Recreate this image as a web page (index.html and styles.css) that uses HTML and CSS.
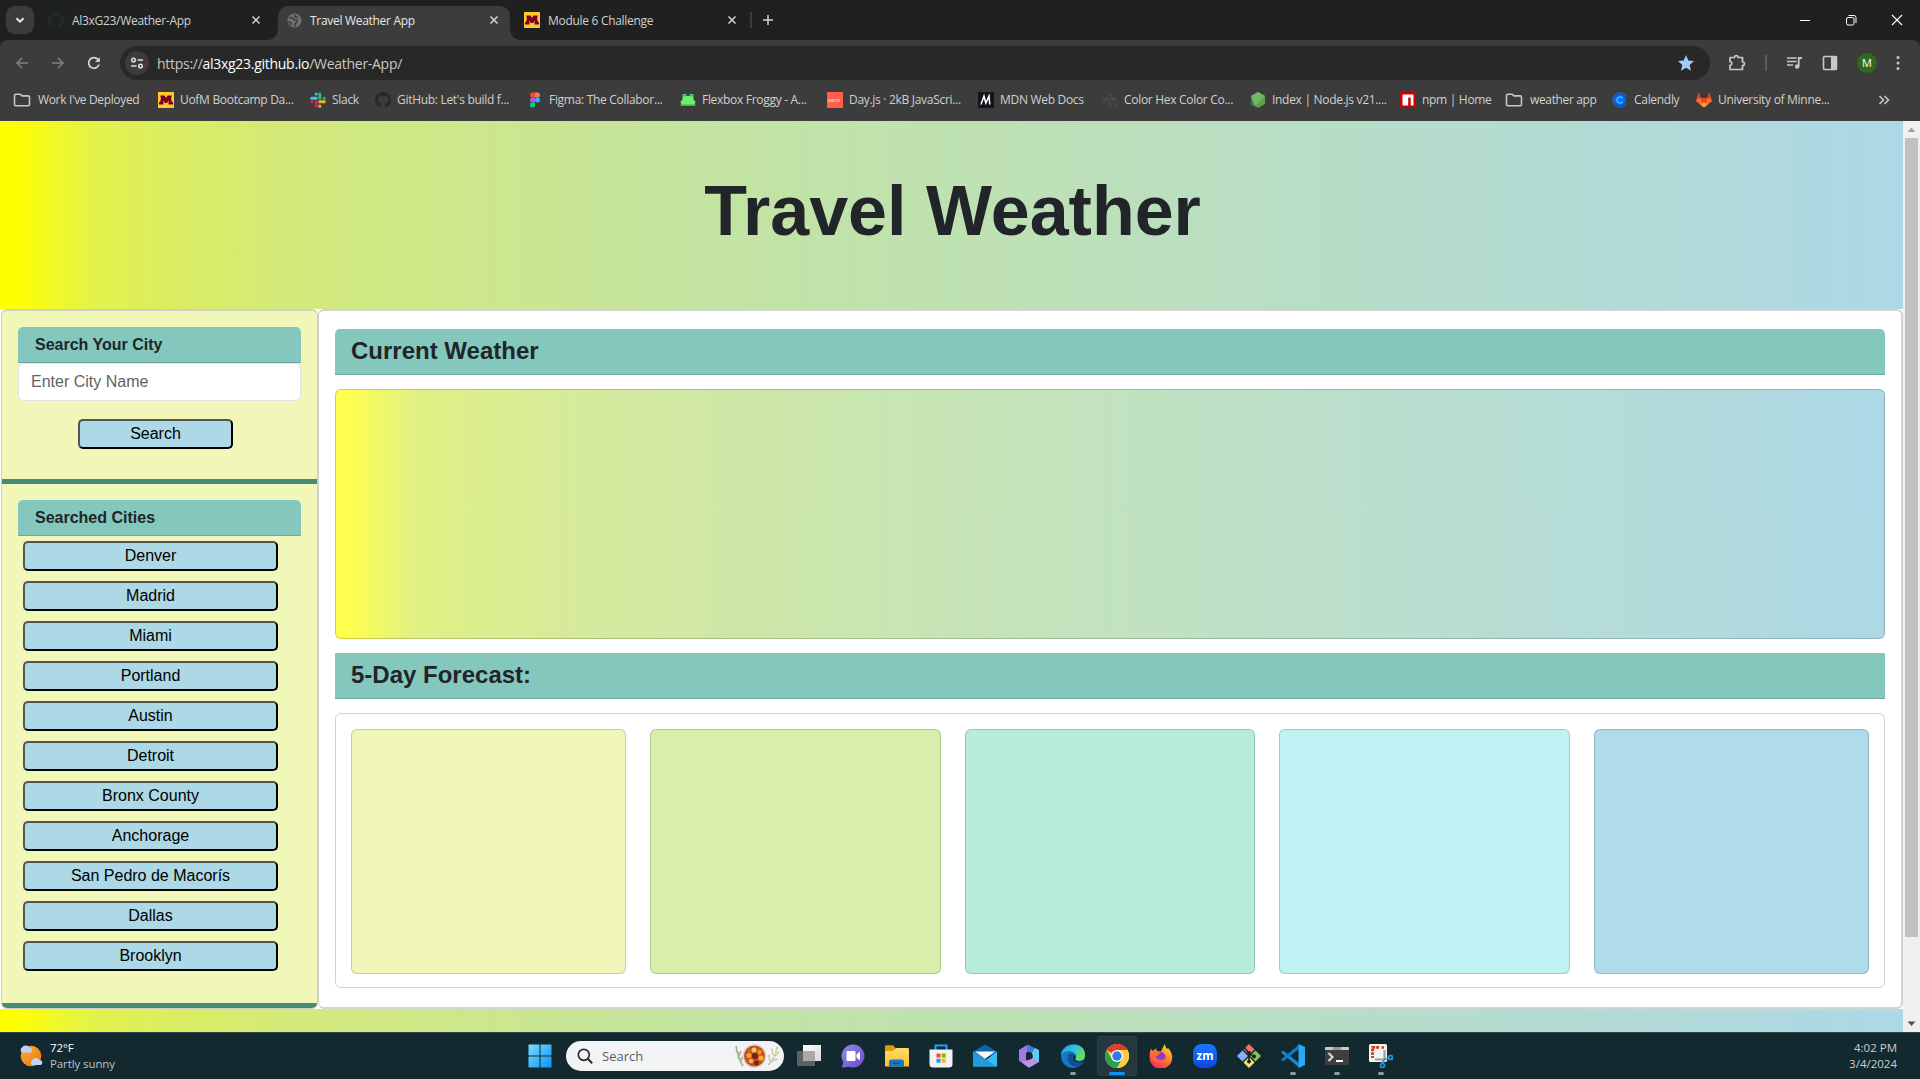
FILE: index.html
```html
<!DOCTYPE html>
<html lang="en">
<head>
<meta charset="utf-8">
<title>Travel Weather App</title>
<link rel="stylesheet" href="styles.css">
</head>
<body>
<svg width="0" height="0" class="defs">
  <defs>
    <linearGradient id="gWin" x1="0" y1="0" x2="1" y2="1"><stop offset="0" stop-color="#7adcff"/><stop offset="1" stop-color="#0a93f5"/></linearGradient>
    <linearGradient id="gSun" x1="0" y1="0" x2="1" y2="1"><stop offset="0" stop-color="#f9b233"/><stop offset="1" stop-color="#ee7412"/></linearGradient>
    <linearGradient id="gEdge" x1="0" y1="0" x2="1" y2="0.6"><stop offset="0" stop-color="#1b9de2"/><stop offset=".55" stop-color="#34c6d8"/><stop offset="1" stop-color="#6be04c"/></linearGradient>
    <linearGradient id="gFox" x1="0.8" y1="0" x2="0.3" y2="1"><stop offset="0" stop-color="#ffe033"/><stop offset=".45" stop-color="#ff8a1e"/><stop offset="1" stop-color="#f5246b"/></linearGradient>
    <linearGradient id="gZoom" x1="0" y1="0" x2="0" y2="1"><stop offset="0" stop-color="#1a76ff"/><stop offset="1" stop-color="#0b49dc"/></linearGradient>
    <linearGradient id="gChat" x1="0" y1="0" x2="1" y2="1"><stop offset="0" stop-color="#8d8ae8"/><stop offset="1" stop-color="#6a4dcb"/></linearGradient>
    <linearGradient id="gFolder" x1="0" y1="0" x2="0" y2="1"><stop offset="0" stop-color="#ffdc6a"/><stop offset="1" stop-color="#fbbf2d"/></linearGradient>
    <symbol id="github" viewBox="0 0 16 16"><path d="M8 0C3.58 0 0 3.58 0 8c0 3.54 2.29 6.53 5.47 7.59.4.07.55-.17.55-.38 0-.19-.01-.82-.01-1.49-2.01.37-2.53-.49-2.69-.94-.09-.23-.48-.94-.82-1.13-.28-.15-.68-.52-.01-.53.63-.01 1.08.58 1.23.82.72 1.21 1.87.87 2.33.66.07-.52.28-.87.51-1.07-1.78-.2-3.64-.89-3.64-3.95 0-.87.31-1.59.82-2.15-.08-.2-.36-1.02.08-2.12 0 0 .67-.21 2.2.82a7.6 7.6 0 0 1 4 0c1.53-1.04 2.2-.82 2.2-.82.44 1.1.16 1.92.08 2.12.51.56.82 1.27.82 2.15 0 3.07-1.87 3.75-3.65 3.95.29.25.54.73.54 1.48 0 1.07-.01 1.93-.01 2.2 0 .21.15.46.55.38A8 8 0 0 0 16 8c0-4.42-3.58-8-8-8z" fill="#24292f"/></symbol>
    <symbol id="umn" viewBox="0 0 16 16"><path d="M0 0h16v16H0z" fill="#ffc72c"/><path d="M2.500 3.500h4L8 6l1.500-2.500h4v2.300h-.6l1 4.200H15v2.500h-4.500V10h.5l-.2-1L9 11H7L5.200 9 5 10h.5v2.500H1V10h1.100l1-4.200h-.6z" fill="#7a0019"/></symbol>
    <symbol id="folder" viewBox="0 0 18 16"><path d="M1.500 3.500v9a1.300 1.300 0 0 0 1.300 1.300h12.400a1.300 1.300 0 0 0 1.300-1.300V5.200a1.300 1.300 0 0 0-1.300-1.300H9L7.200 2.200H2.800a1.300 1.300 0 0 0-1.300 1.300z" fill="none" stroke="#c7c7c7" stroke-width="1.600"/></symbol>
    <symbol id="close" viewBox="0 0 10 10"><path d="M1.500 1.500l7 7M8.500 1.500l-7 7" stroke="#d4d4d4" stroke-width="1.500"/></symbol>
  </defs>
</svg>
<div class="screen">
  <div class="tabstrip">
    <div class="tabsearch"><svg width="12" height="12" viewBox="0 0 12 12"><path d="M2.500 4.300L6 7.700l3.500-3.400" fill="none" stroke="#e8e8e8" stroke-width="2"/></svg></div>
    <div class="tab tab-one"><svg width="16" height="16"><use href="#github"/></svg><span>Al3xG23/Weather-App</span><svg width="10" height="10"><use href="#close"/></svg></div>
    <div class="tab tab-active"><svg width="15" height="15" viewBox="0 0 15 15"><circle cx="7.500" cy="7.500" r="7" fill="#6f7277"/><path d="M2 4.500l3.500.5 1.500 2h3v1.800L8 11v2.500M7 1.500L8.500 4l3 .5M1.500 8.500L4 10v2.500" fill="none" stroke="#3c3c3c" stroke-width="1.600"/></svg><span>Travel Weather App</span><svg width="10" height="10"><use href="#close"/></svg></div>
    <div class="tab tab-three"><svg width="16" height="16"><use href="#umn"/></svg><span>Module 6 Challenge</span><svg width="10" height="10"><use href="#close"/></svg></div>
    <i class="tabsep"></i>
    <svg class="newtab" width="12" height="12" viewBox="0 0 12 12"><path d="M6 1v10M1 6h10" stroke="#d4d4d4" stroke-width="1.500"/></svg>
    <div class="winctl">
      <svg width="12" height="12" viewBox="0 0 12 12"><path d="M1 6.500h10" stroke="#fff"/></svg>
      <svg width="12" height="12" viewBox="0 0 12 12"><rect x="1.500" y="3.500" width="7.500" height="7.500" rx="1.500" fill="none" stroke="#fff"/><path d="M3.500 1.500H9a2 2 0 0 1 2 2V9" fill="none" stroke="#fff"/></svg>
      <svg width="12" height="12" viewBox="0 0 12 12"><path d="M1 1l10 10M11 1L1 11" stroke="#fff" stroke-width="1.100"/></svg>
    </div>
  </div>
  <div class="toolbar">
    <div class="nav">
      <svg width="14" height="14" viewBox="0 0 14 14"><path d="M13 7H2M7 2L2 7l5 5" fill="none" stroke="#7f7f7f" stroke-width="1.500"/></svg>
      <svg width="14" height="14" viewBox="0 0 14 14"><path d="M1 7h11M7 2l5 5-5 5" fill="none" stroke="#7f7f7f" stroke-width="1.500"/></svg>
      <svg width="14" height="14" viewBox="0 0 14 14"><path d="M12 8.500A5.300 5.300 0 1 1 11 3.500L12.500 5" fill="none" stroke="#d0d0d0" stroke-width="1.800"/><path d="M12.700 1v5H8z" fill="#d0d0d0"/></svg>
    </div>
    <div class="omnibox">
      <div class="siteinfo"><svg width="14" height="14" viewBox="0 0 14 14"><path d="M7.500 4H13M1 10h5.500" stroke="#e0e0e0" stroke-width="1.700"/><circle cx="3.500" cy="4" r="1.800" fill="none" stroke="#e0e0e0" stroke-width="1.500"/><circle cx="10.500" cy="10" r="1.800" fill="none" stroke="#e0e0e0" stroke-width="1.500"/></svg></div>
      <span class="url">https://<b>al3xg23.github.io</b>/Weather-App/</span>
      <svg width="16" height="16" viewBox="0 0 16 16"><path d="M8 0l2.300 5.600 5.700.5-4.300 3.900 1.300 5.800L8 12.700 3 15.800 4.300 10 0 6.100l5.700-.5z" fill="#a8c7fa"/></svg>
    </div>
    <div class="actions">
      <svg width="18" height="18" viewBox="0 0 18 18"><path d="M2 3.500h4.500C6.500 1 10 1 10 3.500h4.500V8c2.600 0 2.600 3.500 0 3.500v4H2v-4.200c2.500-.3 2.500-3.300 0-3.600z" fill="none" stroke="#c7c7c7" stroke-width="1.700" stroke-linejoin="round"/></svg>
      <i></i>
      <svg width="17" height="16" viewBox="0 0 17 16"><path d="M1 3h9.500M1 6.500h9.500M1 10h6" stroke="#c7c7c7" stroke-width="1.600"/><path d="M12.700 11V3H16" fill="none" stroke="#c7c7c7" stroke-width="1.800"/><circle cx="11.200" cy="11.500" r="2.300" fill="#c7c7c7"/></svg>
      <svg width="16" height="16" viewBox="0 0 16 16"><rect x="1.500" y="1.500" width="13" height="13" rx="1" fill="none" stroke="#c7c7c7" stroke-width="1.600"/><path d="M9 1h6v14H9z" fill="#c7c7c7"/></svg>
      <div class="avatar">M</div>
      <svg width="4" height="16" viewBox="0 0 4 16"><circle cx="2" cy="2.500" r="1.500" fill="#c7c7c7"/><circle cx="2" cy="8" r="1.500" fill="#c7c7c7"/><circle cx="2" cy="13.500" r="1.500" fill="#c7c7c7"/></svg>
    </div>
  </div>
  <div class="bookmarks">
    <div class="wide"><svg width="18" height="16"><use href="#folder"/></svg><span>Work I've Deployed</span></div>
    <div><svg width="16" height="16"><use href="#umn"/></svg><span>UofM Bootcamp Da...</span></div>
    <div><svg width="16" height="16" viewBox="0 0 16 16" fill="none" stroke-width="3" stroke-linecap="round"><path d="M6.200 2v.1M1.700 6.200h4.500" stroke="#36c5f0"/><path d="M9.800 2v4.200M14.300 6.200h-.2" stroke="#2eb67d"/><path d="M9.800 9.800h4.500M9.800 14v.2" stroke="#ecb22e"/><path d="M6.200 9.800v4.200M1.700 9.800h.2" stroke="#e01e5a"/></svg><span>Slack</span></div>
    <div><svg width="16" height="16"><use href="#github"/></svg><span>GitHub: Let's build f...</span></div>
    <div><svg width="16" height="16" viewBox="0 0 16 16"><path d="M8 .5H5.500a2.500 2.500 0 0 0 0 5H8z" fill="#f24e1e"/><path d="M8 .5h2.500a2.500 2.500 0 0 1 0 5H8z" fill="#ff7262"/><path d="M8 5.500H5.500a2.500 2.500 0 0 0 0 5H8z" fill="#a259ff"/><circle cx="10.500" cy="8" r="2.500" fill="#1abcfe"/><path d="M8 10.500H5.500A2.500 2.500 0 1 0 8 13z" fill="#0acf83"/></svg><span>Figma: The Collabor...</span></div>
    <div><svg width="16" height="16" viewBox="0 0 16 16"><circle cx="4.500" cy="4" r="2.200" fill="#5fe06a"/><circle cx="11.500" cy="4" r="2.200" fill="#5fe06a"/><path d="M3 4h10l.7 4 1.800 1.500-.8 4H1.300l-.8-4L2.300 8z" fill="#6cf06f"/><path d="M.5 12.500h15V14H.5z" fill="#3cae49"/><circle cx="4.500" cy="3.700" r=".7" fill="#256b2d"/><circle cx="11.500" cy="3.700" r=".7" fill="#256b2d"/></svg><span>Flexbox Froggy - A...</span></div>
    <div><svg width="16" height="16" viewBox="0 0 16 16"><path d="M0 0h16v16H0z" fill="#ff5f4c"/><text x="1" y="9.500" class="dayjs">DAY.JS</text></svg><span>Day.js · 2kB JavaScri...</span></div>
    <div><svg width="16" height="16" viewBox="0 0 16 16"><path d="M0 0h16v16H0z" fill="#15141a"/><path d="M3 12.500L6 4l1.800 7L11 4l.8 8.500M8 11l3-7" fill="none" stroke="#fff" stroke-width="1.500"/></svg><span>MDN Web Docs</span></div>
    <div><svg width="16" height="16" viewBox="0 0 16 16"><text x="0.500" y="13.500" class="chex">ch</text></svg><span>Color Hex Color Co...</span></div>
    <div><svg width="16" height="16" viewBox="0 0 16 16"><path d="M8 0l7 4v8l-7 4-7-4V4z" fill="#5fa04e"/><path d="M8 0l7 4-10 10-4-2V4z" fill="#6fb963"/><path d="M1 4l4 10-4-2z" fill="#3e863d"/></svg><span>Index | Node.js v21....</span></div>
    <div><svg width="16" height="16" viewBox="0 0 16 16"><path d="M0 0h16v16H0z" fill="#cb0000"/><path d="M2.500 2.500h11v11h-2.800v-8H8.200v8H2.500z" fill="#fff"/></svg><span>npm | Home</span></div>
    <div class="wide"><svg width="18" height="16"><use href="#folder"/></svg><span>weather app</span></div>
    <div><svg width="16" height="16" viewBox="0 0 16 16"><path d="M14.500 4.500a7.200 7.200 0 1 0 0 7" fill="none" stroke="#0a6cf0" stroke-width="1.300"/><circle cx="8" cy="8" r="5.800" fill="#006bff"/><path d="M10.500 6.300a3 3 0 1 0 0 3.400" fill="none" stroke="#3fc4ff" stroke-width="1.500"/></svg><span>Calendly</span></div>
    <div><svg width="16" height="16" viewBox="0 0 16 16"><path d="M0 9.300L2.700.8l2 5.500h6.600l2-5.500L16 9.300 8 15.500z" fill="#fc6d26"/><path d="M2.700.8l2 5.500H1zM13.300.8l-2 5.500H15zM4.700 6.300h6.600L8 15z" fill="#e24329"/><path d="M4.500 12.500L8 10l3.500 2.500L8 15.500z" fill="#fca326"/></svg><span>University of Minne...</span></div>
    <svg class="more" width="12" height="12" viewBox="0 0 12 12"><path d="M1.500 2l4 4-4 4M6.500 2l4 4-4 4" fill="none" stroke="#c7c7c7" stroke-width="1.600"/></svg>
  </div>

  <div class="viewport">
    <div class="page">
      <header class="hero"><h1>Travel Weather</h1></header>
      <div class="columns">
        <aside class="sidebar">
          <section class="search">
            <h5>Search Your City</h5>
            <input type="text" placeholder="Enter City Name">
            <button>Search</button>
          </section>
          <section class="history">
            <h5>Searched Cities</h5>
            <button>Denver</button><button>Madrid</button><button>Miami</button><button>Portland</button><button>Austin</button><button>Detroit</button><button>Bronx County</button><button>Anchorage</button><button>San Pedro de Macorís</button><button>Dallas</button><button>Brooklyn</button>
          </section>
        </aside>
        <main class="main">
          <h4 class="round">Current Weather</h4>
          <div class="current"></div>
          <h4>5-Day Forecast:</h4>
          <div class="forecast">
            <div class="day d1"></div><div class="day d2"></div><div class="day d3"></div><div class="day d4"></div><div class="day d5"></div>
          </div>
        </main>
      </div>
      <footer class="foot"></footer>
    </div>
    <div class="scrollbar">
      <svg width="17" height="17" viewBox="0 0 17 17"><path d="M8.500 6.500l4 4.500h-8z" fill="#a3a3a3"/></svg>
      <div class="thumb"></div>
      <svg width="17" height="17" viewBox="0 0 17 17"><path d="M8.500 11l4-4.500h-8z" fill="#505050"/></svg>
    </div>
  </div>

  <div class="taskbar">
    <div class="weather">
      <svg width="26" height="26" viewBox="0 0 26 26"><circle cx="13" cy="13" r="10.300" fill="url(#gSun)"/><path d="M4 9.500a3 3 0 0 1 .3-5.200 4.300 4.300 0 0 1 7.400.5 2.500 2.500 0 0 1 1 4.700z" fill="#bcd0f5"/><path d="M14 22a3 3 0 0 1 .3-4.800 4 4 0 0 1 7-.2 2.700 2.700 0 0 1 1.700 5z" fill="#c5d7f8"/></svg>
      <p><b>72°F</b><br>Partly sunny</p>
    </div>
    <div class="apps">
      <svg class="start" width="24" height="24" viewBox="0 0 24 24"><path d="M.5.5h11v11H.5zM12.500.5h11v11h-11zM.5 12.500h11v11H.5zM12.500 12.500h11v11h-11z" fill="url(#gWin)"/></svg>
      <div class="tasksearch">
        <svg width="16" height="16" viewBox="0 0 16 16"><circle cx="6.800" cy="6.800" r="5.500" fill="none" stroke="#2b2b2b" stroke-width="1.700"/><path d="M10.800 10.800l4.400 4.400" stroke="#2b2b2b" stroke-width="2"/></svg>
        <span>Search</span>
        <svg width="46" height="26" viewBox="0 0 46 26"><path d="M2 3q2 12 7 20M2.500 8l3 3M3.500 14l4 4M7 8l-2 5M9 13l-2 4" stroke="#a9b48c" stroke-width="1.700" fill="none"/><path d="M43 4q-2 12-9 18M38 6l1 7M45 9l-4 4M43 16l-5 2M35 12l1 8" stroke="#c0c59b" stroke-width="1.700" fill="none" stroke-dasharray="2.500 1"/><circle cx="20.500" cy="13" r="12" fill="#d9dadb"/><circle cx="20.500" cy="13" r="10.500" fill="#c9501b"/><circle cx="15" cy="12.500" r="2.500" fill="#ff9d2c"/><circle cx="20" cy="7" r="2.500" fill="#f1c476"/><circle cx="25.500" cy="9" r="2.200" fill="#ff8c1a"/><circle cx="21" cy="13" r="3" fill="#6a241b"/><circle cx="27" cy="15" r="2.500" fill="#ffae47"/><circle cx="17" cy="18" r="2.200" fill="#f4b15c"/><circle cx="22.500" cy="20" r="2.400" fill="#74261b"/><circle cx="15.500" cy="8" r="1.200" fill="#65a529"/><circle cx="25" cy="12" r="1" fill="#65a529"/></svg>
      </div>
      <div class="app"><svg width="24" height="24" viewBox="0 0 24 24"><defs><linearGradient id="gTask" x1="0" y1="0" x2="1" y2="1"><stop offset="0" stop-color="#fff"/><stop offset="1" stop-color="#d8d8d8"/></linearGradient></defs><path d="M6 1h18v16H6z" fill="url(#gTask)"/><path d="M0 7h18v15H0z" fill="#5d6163"/><path d="M6 7h12v10H6z" fill="#a8a9a9"/></svg></div>
      <div class="app"><svg width="24" height="24" viewBox="0 0 24 24"><path d="M12 .5A11.500 11.500 0 1 1 8 22.800L.8 23.500l1.600-5.200A11.500 11.500 0 0 1 12 .5z" fill="url(#gChat)"/><rect x="5.500" y="7" width="9" height="10" rx="1" fill="#fff"/><path d="M15.500 10.500L19 7.500v9l-3.500-3z" fill="#fff"/></svg></div>
      <div class="app"><svg width="24" height="24" viewBox="0 0 24 24"><path d="M0 2.500A1.300 1.300 0 0 1 1.300 1.200H8L10.500 4v4H0z" fill="#dc9c0f"/><path d="M0 7h8l3-3h11.700A1.300 1.300 0 0 1 24 5.300V22.500H0z" fill="url(#gFolder)"/><path d="M4 22.500V18a2.500 2.500 0 0 1 2.500-2.500h10A2.500 2.500 0 0 1 19 18v4.500z" fill="#1379ca"/><path d="M8 18.500h7v1.500H8z" fill="#075795"/></svg></div>
      <div class="app"><svg width="24" height="24" viewBox="0 0 24 24"><path d="M6.500 6V1.500h11V6" fill="none" stroke="#16a7ee" stroke-width="2"/><path d="M.5 5.500h23V20a3.500 3.500 0 0 1-3.500 3.500H4A3.500 3.500 0 0 1 .5 20z" fill="#f2f2f2"/><path d="M7.500 9.500h4v4h-4z" fill="#f25022"/><path d="M12.700 9.500h4v4h-4z" fill="#7fba00"/><path d="M7.500 14.700h4v4h-4z" fill="#00a4ef"/><path d="M12.700 14.700h4v4h-4z" fill="#ffb900"/></svg></div>
      <div class="app"><svg width="24" height="24" viewBox="0 0 24 24"><path d="M0 7.500L12 .5l12 7V12H0z" fill="#0f62ad"/><path d="M2 7.500h20L12 15z" fill="#f3f5f7"/><path d="M0 7.500L13 16l11-8.500v15H0z" fill="#35bdf0"/><path d="M0 7.500L24 22.500H0z" fill="#219bdd"/></svg></div>
      <div class="app"><svg width="24" height="24" viewBox="0 0 24 24"><path d="M10.500.8L2 6v10.500l5 2.500 2-2.500V9l4-3V1.500z" fill="#a17be4"/><path d="M10.500.8L21 5.500q1 .5 1 1.500v6l-6-1-1-3-4-1.500q-2.500-3-.5-6.700z" fill="#3c7fd0"/><path d="M2 16.500l3 1 6-1.500 4-2 1-2 6 5v1L13 23.300q-1 .5-2 0z" fill="#bd91e6"/><path d="M15 9l3-4.800 3 1.300q1 .5 1 1.500v11l-6-4z" fill="#62cdf4"/><path d="M12 8.500l3.500 2v3.500L12 16l-3-2v-3.500z" fill="#12292f"/></svg></div>
      <div class="app run"><svg width="24" height="24" viewBox="0 0 24 24"><circle cx="12" cy="12" r="12" fill="#1479c8"/><path d="M0 11C1-1 24-4 24 11c0 5-5 7-9 5-2-1 .5-2 0-4.500C14 6 4 5 0 11z" fill="url(#gEdge)"/><path d="M7 11c-2 7 4 13 11 11.500 2-1 4-3 5-5-4 2-9 1-11-2-1.300-2-.5-4 1-5-2-1.500-5-1.500-6 .5z" fill="#104f91"/><path d="M14.500 11c1 2-1 3.500 0 5 2 2 6 2 8.500-.5l-.5 2c-4 2-9 1-10.500-2.500-1-2 0-3.500 2.500-4z" fill="#12292f"/></svg></div>
      <div class="app active"><svg width="24" height="24" viewBox="0 0 24 24"><circle cx="12" cy="12" r="12" fill="#ffcd40"/><path d="M12 12L1.600 6A12 12 0 0 1 22.400 6H12z" fill="#e33b2e"/><path d="M1.600 6a12 12 0 0 0 10.400 18l5.200-9L12 12 6.800 15z" fill="#2da24c"/><path d="M12 6h10.400A12 12 0 0 1 12 24l5.200-9z" fill="#ffcd40"/><circle cx="12" cy="12" r="6" fill="#fff"/><circle cx="12" cy="12" r="4.700" fill="#2c7bea"/></svg></div>
      <div class="app"><svg width="24" height="24" viewBox="0 0 24 24"><path d="M2 5c.5 0 1 1 1.500 2L7 4.500 8 7l4 .5c1-2 2-5 4-7.500.3 2 .5 3.500 2 5l1-1c3 3 4.500 7 4.200 10A11.300 11.300 0 0 1 .6 13C.5 10 1 7 2 5z" fill="url(#gFox)"/><circle cx="11.500" cy="13" r="5" fill="#8f36d3"/><path d="M3 8c4-2 6 0 9 0l-2.500 3-3 1.500c1 4 7 5 9.500 1 0 6-11 7-13 0z" fill="#ff6932"/></svg></div>
      <div class="app"><svg width="24" height="24" viewBox="0 0 24 24"><rect width="24" height="24" rx="8.500" fill="url(#gZoom)"/><text x="12" y="15.500" class="zm" text-anchor="middle">zm</text></svg></div>
      <div class="app"><svg width="24" height="24" viewBox="0 0 24 24"><path d="M12 0l5.500 5.500L12 11 6.500 5.500z" fill="#f0726b"/><path d="M5.500 6.500L11 12l-5.500 5.500L0 12z" fill="#80b3fa"/><path d="M18.500 6.500L24 12l-5.500 5.500L13 12z" fill="#7ec85b"/><path d="M12 13l5.500 5.500L12 24l-5.500-5.500z" fill="#ffdf70"/><path d="M7.500 4l4.500 5v9M12 9l5 4" fill="none" stroke="#1b2425" stroke-width="1.600"/><circle cx="12" cy="9" r="2" fill="#1b2425"/><circle cx="17" cy="12.500" r="2" fill="#1b2425"/><circle cx="12" cy="17.500" r="2" fill="#1b2425"/></svg></div>
      <div class="app run"><svg width="24" height="24" viewBox="0 0 24 24"><path d="M2 6.500L18 19v4.500L0 8.500z" fill="#1988d2"/><path d="M2 17.500L18 5V.5L0 15.500z" fill="#1279be"/><path d="M17.500 0L24 3v18l-6.500 3z" fill="#2aa8f2"/></svg></div>
      <div class="app run"><svg width="24" height="24" viewBox="0 0 24 24"><rect y="3" width="24" height="18" rx="1" fill="#3e3e3e"/><path d="M0 6V4a1 1 0 0 1 1-1h22a1 1 0 0 1 1 1v2z" fill="#c8c8c8"/><path d="M8 3h8v3H8z" fill="#999"/><path d="M3.500 9l4 4-4 4" fill="none" stroke="#d3d3d3" stroke-width="2.200"/><path d="M11 17h7" stroke="#fff" stroke-width="2"/></svg></div>
      <div class="app run"><svg width="24" height="24" viewBox="0 0 24 24"><rect width="18" height="18" rx="1.500" fill="#f4f4f4"/><path d="M10 3.300H3.500V14" fill="none" stroke="#d83b01" stroke-width="2.800" stroke-dasharray="2.800 1"/><path d="M12.500 3.500H15" stroke="#d83b01" stroke-width="2.500"/><path d="M15.500 6v9.500H6M15 15l-1.500 5" fill="none" stroke="#9aa0a3" stroke-width="2.200"/><circle cx="21.500" cy="13.500" r="2" fill="none" stroke="#2598e0" stroke-width="1.700"/><circle cx="13.500" cy="21.500" r="2" fill="none" stroke="#2598e0" stroke-width="1.700"/><path d="M19.500 14l-4.500 1.500-1 4" stroke="#2598e0" stroke-width="1.500" fill="none"/></svg></div>
    </div>
    <p class="clock">4:02 PM<br>3/4/2024</p>
  </div>
</div>
</body>
</html>
```
FILE: styles.css
```css
* { box-sizing: border-box; }
body { margin: 0; font-family: "Liberation Sans", Arial, sans-serif; color: #212529; overflow: hidden; }
svg { display: block; flex: none; }
.defs { position: absolute; }
p, h1, h4, h5 { margin: 0; }
.screen { width: 1920px; height: 1079px; display: flex; flex-direction: column; background: #1f2120; }

/* Browser chrome */
.tabstrip, .toolbar, .bookmarks, .taskbar { font-family: "Open Sans", "Noto Sans", sans-serif; font-size: 12px; letter-spacing: -0.3px; color: #d0d0d0; white-space: nowrap; flex: none; }
.tabstrip { height: 40px; display: flex; align-items: center; padding-left: 6px; }
.tabsearch { width: 28px; height: 28px; border-radius: 9px; background: #3c3c3c; display: grid; place-items: center; }
.tab { display: flex; align-items: center; gap: 8px; height: 34px; align-self: flex-end; padding-bottom: 6px; }
.tab span { flex: 1; }
.tab-one { width: 243px; padding: 0 16px 6px 14px; }
.tab-active { width: 232px; margin-left: 1px; padding: 0 11px 6px 9px; border-radius: 10px 10px 0 0; background: #3c3c3c; color: #e6e6e6; position: relative; }
.tab-active::before, .tab-active::after { content: ""; position: absolute; bottom: 0; width: 10px; height: 10px; }
.tab-active::before { left: -10px; background: radial-gradient(circle at 0 0, transparent 9.5px, #3c3c3c 10px); }
.tab-active::after { right: -10px; background: radial-gradient(circle at 100% 0, transparent 9.5px, #3c3c3c 10px); }
.tab-three { width: 234px; padding: 0 7px 6px 14px; }
.tabsep { width: 2px; height: 16px; margin-left: 6px; background: #3c3c3c; }
.newtab { margin-left: 10px; }
.winctl { margin-left: auto; display: flex; gap: 34px; padding-right: 17px; }
.toolbar { height: 44px; display: flex; align-items: center; padding: 3px 22px 1px 15px; background: #3c3c3c; border-radius: 8px 8px 0 0; }
.nav { display: flex; gap: 22px; width: 105px; flex: none; }
.omnibox { width: 1590px; flex: none; height: 34px; border-radius: 17px; background: #282828; display: flex; align-items: center; padding: 0 16px 0 5px; }
.siteinfo { width: 24px; height: 24px; border-radius: 50%; background: #3c3c3c; display: grid; place-items: center; }
.url { flex: 1; margin-left: 8px; font-size: 14px; color: #c7c7c7; letter-spacing: -0.28px; }
.url b { font-weight: 400; color: #fff; }
.actions { flex: 1; display: flex; align-items: center; justify-content: space-between; padding-left: 18px; margin-right: -2px; }
.actions i { width: 2px; height: 16px; background: #5b5b5b; }
.avatar { width: 20px; height: 20px; border-radius: 50%; background: #33691e; color: #fff; text-align: center; line-height: 20px; font-size: 11px; letter-spacing: 0; }
.bookmarks { height: 37px; display: grid; grid-template-columns: 145px 152px 65px 152px 153px 147px 151px 124px 148px 150px 105px 107px 84px 182px 12px; align-items: center; padding: 0 0 6px 13px; background: #3c3c3c; }
.bookmarks div { display: flex; align-items: center; gap: 6px; }
.bookmarks .wide { gap: 7px; letter-spacing: -0.35px; }
.dayjs { font: bold 4px "Liberation Sans", sans-serif; fill: #ffd1ca; }
.chex { font: 14px "Liberation Sans", sans-serif; fill: #1c1c1c; stroke: #707070; stroke-width: .4px; letter-spacing: 0; }

/* Page */
.viewport { flex: 1; display: flex; min-height: 0; }
.page { width: 1903px; display: flex; flex-direction: column; background: #fff; }
.hero, .foot { background: linear-gradient(to right, #ff0 0%, #ff0 .7%, #e2f24c 5%, #daed63 9.5%, #d2e97c 16%, #c4e4a0 36%, #bbdfbd 60%, #add8e6 100%); }
.hero { height: 188px; flex: none; padding: 48px 0 0 2px; }
.hero h1 { font-size: 70px; line-height: 84px; text-align: center; }
.foot { flex: 1; }
.columns { display: flex; height: 700px; flex: none; }
.sidebar { width: 317px; margin-left: 1px; border: 1px solid #cfd0c4; border-top-width: 2px; border-radius: 6px; background: #f1f7b8; overflow: hidden; }
.sidebar section { padding: 16px; border-bottom: 5px solid #468c72; }
.search { height: 173px; }
.history { height: 524px; }
.sidebar h5 { height: 36px; padding: 0 17px; border-bottom: 1px solid #6fa89f; border-radius: 5px 5px 0 0; background: #84c7bd; font-size: 16px; line-height: 35px; }
.sidebar button { display: block; height: 30px; border: 2px outset #000; border-radius: 5px; padding: 0; background: #add8e6; color: #000; font: 16px "Liberation Sans", Arial, sans-serif; }
.search input { display: block; width: 283px; height: 38px; border: 1px solid #dee2e6; border-radius: 6px; padding: 0 12px 1px; background: #fff; font: 16px "Liberation Sans", Arial, sans-serif; }
.search input::placeholder { color: #5f6367; }
.search button { width: 155px; margin: 18px 0 0 60px; }
.history button { width: 255px; margin: 0 0 10px 5px; }
.history h5 + button { margin-top: 5px; }
.main { flex: 1; border: 2px solid #d3d3d3; border-left-width: 1px; border-radius: 6px; padding: 18px 16px 0; }
.main h4 { height: 46px; padding: 0 16px; border-bottom: 1px solid #6fa89f; background: #84c7bd; font-size: 24px; line-height: 44px; }
.main .round { border-radius: 5px 5px 0 0; }
.current { height: 250px; margin: 14px 0; border: 1px solid rgba(0, 0, 0, .18); border-radius: 6px; background: linear-gradient(to right, #ffff4d 0%, #ffff4d .7%, #e2f182 5%, #dbee8e 9.5%, #d5ea9c 16%, #c8e5b2 36%, #bde0c8 60%, #add8e6 100%) border-box; }
.forecast { height: 275px; margin-top: 14px; border: 1px solid #d3d3d3; border-radius: 6px; padding: 15px; display: grid; grid-template-columns: 275px 291px 290px 291px 275px; justify-content: space-between; }
.day { height: 245px; border: 1px solid rgba(0, 0, 0, .17); border-radius: 6px; }
.d1 { background: #f1f7b8; }
.d2 { background: #d8efab; }
.d3 { background: #b8eddb; }
.d4 { background: #bff3f3; }
.d5 { background: #b0dce9; }
.scrollbar { width: 17px; display: flex; flex-direction: column; align-items: center; background: #f0f0f0; }
.thumb { width: 13px; height: 799px; margin-bottom: auto; background: #c1c1c1; }

/* Taskbar */
.taskbar { height: 47px; display: flex; align-items: center; justify-content: space-between; background: #12292f; border-top: 1px solid #34484c; letter-spacing: 0; line-height: 16px; }
.weather { width: 528px; padding-left: 18px; display: flex; align-items: center; gap: 6px; font-size: 11.500px; letter-spacing: -0.1px; color: #bcc4c6; }
.weather b { font-weight: 400; color: #fff; }
.apps { flex: 1; display: flex; align-items: center; }
.tasksearch { width: 218px; height: 30px; margin: 0 3px 0 14px; border-radius: 15px; background: #f1f3f5; display: flex; align-items: center; gap: 9px; padding: 0 4px 0 11px; }
.tasksearch span { flex: 1; font-size: 13px; color: #5b5e60; }
.app { width: 40px; height: 40px; margin: 0 2px; display: grid; place-items: center; position: relative; border-radius: 4px; }
.app.active { background: #24383e; box-shadow: 0 0 0 1px #2b4046 inset; }
.run::after, .active::after { content: ""; position: absolute; bottom: 1px; left: 17px; width: 6px; height: 3px; border-radius: 2px; background: #949c9e; }
.active::after { left: 12px; width: 16px; background: #0a93f5; }
.zm { font: bold 11.500px "Open Sans", sans-serif; fill: #fff; }
.clock { padding-right: 23px; text-align: right; font-size: 11.500px; color: #c9cfd0; }
```
